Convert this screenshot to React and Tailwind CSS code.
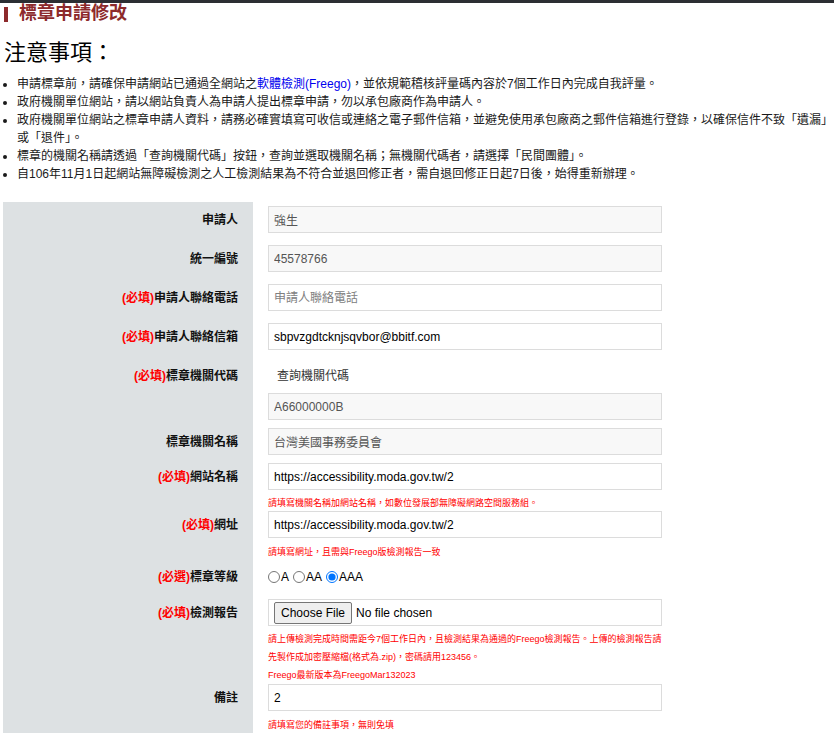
import { useState } from 'react';

const notes = [
    <>申請標章前，請確保申請網站已通過全網站之<a href="#" className="text-[#0000ee]">軟體檢測(Freego)</a>，並依規範稽核評量碼內容於7個工作日內完成自我評量。</>,
    <>政府機關單位網站，請以網站負責人為申請人提出標章申請，勿以承包廠商作為申請人。</>,
    <>政府機關單位網站之標章申請人資料，請務必確實填寫可收信或連絡之電子郵件信箱，並避免使用承包廠商之郵件信箱進行登錄，以確保信件不致「遺漏」或「退件」。</>,
    <>標章的機關名稱請透過「查詢機關代碼」按鈕，查詢並選取機關名稱；無機關代碼者，請選擇「民間團體」。</>,
    <>自106年11月1日起網站無障礙檢測之人工檢測結果為不符合並退回修正者，需自退回修正日起7日後，始得重新辦理。</>,
];

function Row({ label, req, pad = '', children }) {
    return (
        <div className="flex">
            <div className={`w-[250px] shrink-0 bg-[#dde1e3] pr-[15px] ${pad}`}>
                <div className="h-[27px] flex items-center justify-end text-[12px] font-bold text-[#111]">
                    {req && <span className="text-[#ff0000]">({req})</span>}
                    {label}
                </div>
            </div>
            <div className={`pl-[15px] ${pad}`}>{children}</div>
        </div>
    );
}

function Field({ value, placeholder, readOnly }) {
    return (
        <input
            type="text"
            defaultValue={value}
            placeholder={placeholder}
            readOnly={readOnly}
            className={
                readOnly
                    ? 'block w-[394px] h-[27px] border border-[#dcdcdc] bg-[#f8f8f8] px-[5px] text-[12px] text-[#555] outline-none'
                    : 'block w-[394px] h-[27px] border border-[#dcdcdc] bg-white px-[5px] text-[12px] text-black outline-none placeholder:text-[#808080]'
            }
        />
    );
}

function Hint({ className = '', children }) {
    return <p className={`w-[398px] text-[9px] text-[#ff0000] ${className}`}>{children}</p>;
}

export default function App() {
    const [level, setLevel] = useState('AAA');

    return (
        <div className="min-h-[753px] bg-white font-['Liberation_Sans','Noto_Sans_CJK_TC',sans-serif] text-[#1a1a1a]">
            <div className="h-[3px] bg-[#2c2e33]" />

            <h1 className="flex items-center h-[20px] pl-[4px] text-[18px] leading-[20px] font-bold text-[#8d2a2c]">
                <span className="w-[4px] h-[15px] mt-[3px] mr-[11px] bg-[#8d2a2c]" />
                標章申請修改
            </h1>

            <h2 className="mt-[15px] pl-[4px] text-[22px] leading-[30px] font-normal text-black">注意事項：</h2>

            <ul className="mt-[7px] pl-[17px] list-disc text-[12px] leading-[18px]">
                {notes.map((n, i) => (
                    <li key={i}>{n}</li>
                ))}
            </ul>

            <div className="mt-[19px] ml-[3px]">
                <Row label="申請人" pad="pt-[4px]">
                    <Field value="強生" readOnly />
                </Row>
                <Row label="統一編號" pad="pt-[12px]">
                    <Field value="45578766" readOnly />
                </Row>
                <Row label="申請人聯絡電話" req="必填" pad="pt-[12px]">
                    <Field placeholder="申請人聯絡電話" />
                </Row>
                <Row label="申請人聯絡信箱" req="必填" pad="pt-[12px]">
                    <Field value="sbpvzgdtcknjsqvbor@bbitf.com" />
                </Row>
                <Row label="標章機關代碼" req="必填" pad="pt-[12px]">
                    <button type="button" className="h-[27px] px-[9px] text-[12px] text-[#333]">查詢機關代碼</button>
                    <div className="mt-[4px]">
                        <Field value="A66000000B" readOnly />
                    </div>
                </Row>
                <Row label="標章機關名稱" pad="pt-[8px]">
                    <Field value="台灣美國事務委員會" readOnly />
                </Row>
                <Row label="網站名稱" req="必填" pad="pt-[8px]">
                    <Field value="https://accessibility.moda.gov.tw/2" />
                    <Hint className="mt-[5px] leading-[16px]">請填寫機關名稱加網站名稱，如數位發展部無障礙網路空間服務組。</Hint>
                </Row>
                <Row label="網址" req="必填">
                    <Field value="https://accessibility.moda.gov.tw/2" />
                    <Hint className="mt-[6px] leading-[16px]">請填寫網址，且需與Freego版檢測報告一致</Hint>
                </Row>
                <Row label="標章等級" req="必選" pad="pt-[3px]">
                    <div className="h-[27px] flex items-center text-[12px] text-black">
                        {['A', 'AA', 'AAA'].map((lv, i) => (
                            <label key={lv} className={i === 0 ? 'flex items-center' : 'flex items-center ml-[4px]'}>
                                <input
                                    type="radio"
                                    name="level"
                                    checked={level === lv}
                                    onChange={() => setLevel(lv)}
                                    className="m-0 w-[12px] h-[12px]"
                                />
                                <span className="ml-[1px]">{lv}</span>
                            </label>
                        ))}
                    </div>
                </Row>
                <Row label="檢測報告" req="必填" pad="pt-[9px]">
                    <div className="w-[394px] h-[27px] border border-[#dcdcdc] pl-[5px]">
                        <input
                            type="file"
                            className="h-[22px] text-[12px] text-black file:h-[22px] file:mr-[4px] file:px-[6px] file:border file:border-[#767676] file:rounded-[2px] file:bg-[#efefef] file:text-black"
                        />
                    </div>
                    <Hint className="mt-[4px] leading-[18px]">請上傳檢測完成時間需距今7個工作日內，且檢測結果為通過的Freego檢測報告。上傳的檢測報告請先製作成加密壓縮檔(格式為.zip)，密碼請用123456。</Hint>
                    <Hint className="leading-[18px]">Freego最新版本為FreegoMar132023</Hint>
                </Row>
                <Row label="備註">
                    <Field value="2" />
                    <Hint className="mt-[6px] leading-[16px]">請填寫您的備註事項，無則免填</Hint>
                </Row>
            </div>
        </div>
    );
}
